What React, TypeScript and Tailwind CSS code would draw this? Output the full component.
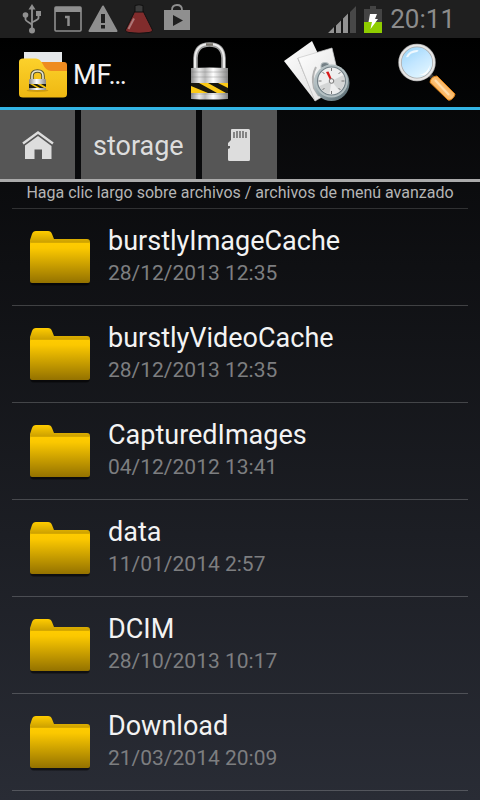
import { useId } from 'react';

interface Folder {
  name: string;
  modified: string;
}

const FOLDERS: Folder[] = [
  { name: 'burstlyImageCache', modified: '28/12/2013 12:35' },
  { name: 'burstlyVideoCache', modified: '28/12/2013 12:35' },
  { name: 'CapturedImages', modified: '04/12/2012 13:41' },
  { name: 'data', modified: '11/01/2014 2:57' },
  { name: 'DCIM', modified: '28/10/2013 10:17' },
  { name: 'Download', modified: '21/03/2014 20:09' },
];

function UsbIcon() {
  return (
    <svg width="20" height="30" viewBox="0 0 20 30" fill="#8f8f8f" aria-hidden="true">
      <path d="M10 0l3.500 5.500h-7z" />
      <path d="M10 4v22M3.500 12v3.500c0 2 6.500 3.500 6.500 6M16.500 9v5c0 2.500-6.500 3-6.500 5" fill="none" stroke="#8f8f8f" strokeWidth="1.800" />
      <circle cx="3.500" cy="11" r="2.800" />
      <rect x="14" y="7" width="5" height="5" />
      <circle cx="10" cy="26.500" r="3" />
    </svg>
  );
}

function CalendarIcon() {
  return (
    <svg width="28" height="26" viewBox="0 0 28 26" aria-hidden="true">
      <rect x="1" y="1" width="26" height="24" rx="1" fill="none" stroke="#8f8f8f" strokeWidth="1.600" />
      <rect x="1" y="1" width="26" height="5" fill="#8f8f8f" />
      <path d="M11 11h3.500v9" fill="none" stroke="#8f8f8f" strokeWidth="2.500" />
    </svg>
  );
}

function WarningIcon() {
  return (
    <svg width="30" height="28" viewBox="0 0 30 28" aria-hidden="true">
      <path d="M15 1.500L28.500 26h-27z" fill="#8f8f8f" stroke="#8f8f8f" strokeWidth="2" strokeLinejoin="round" />
      <path d="M13 9h4v9h-4zM13 20h4v3.500h-4z" fill="#1f1f1f" />
    </svg>
  );
}

function FlaskIcon() {
  return (
    <svg width="30" height="30" viewBox="0 0 30 30" aria-hidden="true">
      <path d="M11 7L1.500 26Q1 28 5 28.500Q15 30 25 28.500Q29 28 28.500 26L19 7z" fill="#812c2c" stroke="#111" />
      <path d="M11 1.500Q15 0 19 1.500V8h-8z" fill="#3d3d3d" stroke="#111" />
      <path d="M10 14.500L4.500 25" stroke="#ad7777" strokeWidth="2" />
    </svg>
  );
}

function PlayStoreIcon() {
  return (
    <svg width="26" height="27" viewBox="0 0 26 27" aria-hidden="true">
      <path d="M8 6q0-5 5-5t5 5" fill="none" stroke="#8f8f8f" strokeWidth="1.800" />
      <path d="M0 6h26v20H0z" fill="#8f8f8f" />
      <path d="M9 11l10 5.500-10 5.500z" fill="#1f1f1f" />
    </svg>
  );
}

function SignalIcon() {
  return (
    <svg width="28" height="27" viewBox="0 0 28 27" aria-hidden="true">
      <path d="M0 27L28 0v27z" fill="#161616" />
      <path d="M0 27l6-6v6zM8 19.500l5-5V27H8zM15 12.500l5-5V27h-5z" fill="#929292" />
      <path d="M22 6l6-6v27h-6z" fill="#484848" />
    </svg>
  );
}

function BatteryIcon() {
  return (
    <svg width="18" height="27" viewBox="0 0 18 27" aria-hidden="true">
      <path d="M6 0h6v3h6v13H0V3h6z" fill="#444" />
      <path d="M0 16h18v11H0z" fill="#8fcd00" />
      <path d="M6 8h7l-2 5h3L6.500 23l1.500-7H4.500z" fill="#fff" />
    </svg>
  );
}

function AppLogo() {
  const id = useId();
  return (
    <svg width="48" height="46" viewBox="0 0 48 46" aria-hidden="true">
      <defs>
        <linearGradient id={`${id}y`} x1="0" y1="0" x2="0" y2="1">
          <stop offset="0" stopColor="#fcd12b" />
          <stop offset="1" stopColor="#efb812" />
        </linearGradient>
        <linearGradient id={`${id}m`} x1="0" y1="0" x2="1" y2="0">
          <stop offset="0" stopColor="#888" />
          <stop offset="0.450" stopColor="#fff" />
          <stop offset="1" stopColor="#888" />
        </linearGradient>
      </defs>
      <path d="M5 0h38v20H5z" fill="#e5e8ea" />
      <path d="M20 10h25q3 0 3 3v20H20z" fill="#ee8c20" />
      <path d="M0 10q0-3.500 4-3.500h13q4 0 7 6 3 6.500 8 6.500h16v23q0 3.500-4 3.500H4q-4 0-4-3.500z" fill={`url(#${id}y)`} />
      <ellipse cx="18.500" cy="38.500" rx="11" ry="1.500" fill="#b28510" opacity="0.600" />
      <path d="M13 28v-4q0-5 5.500-5t5.500 5v4" fill="none" stroke="#575331" strokeWidth="3.600" />
      <path d="M13 28v-4q0-5 5.500-5t5.500 5v4" fill="none" stroke="#e8e5d0" strokeWidth="1.600" />
      <rect x="10" y="27" width="17" height="11" rx="1" fill={`url(#${id}m)`} />
      <path d="M10 32h17v4H10z" fill="#1d1d12" />
      <path d="M11 32l7 4h3l-7-4zM18 32l7 4h2v-1l-5-3z" fill="#f4c511" />
    </svg>
  );
}

function PadlockIcon() {
  const id = useId();
  return (
    <svg width="40" height="63" viewBox="0 0 40 63" aria-hidden="true">
      <defs>
        <linearGradient id={`${id}m`} x1="0" y1="0" x2="1" y2="0">
          <stop offset="0" stopColor="#8b8b8b" />
          <stop offset="0.220" stopColor="#e9e9e9" />
          <stop offset="0.380" stopColor="#b9b9b9" />
          <stop offset="0.600" stopColor="#fff" />
          <stop offset="0.800" stopColor="#c4c4c4" />
          <stop offset="1" stopColor="#858585" />
        </linearGradient>
        <clipPath id={`${id}c`}>
          <path d="M1 42h37v10H1z" />
        </clipPath>
      </defs>
      <path d="M5.500 29V17Q6 3.500 19.500 3.500T33.500 17v12" fill="none" stroke="#a1a1a1" strokeWidth="4.500" />
      <path d="M5 28V17Q6 3 19.500 3T34 17v11" fill="none" stroke="#ededed" strokeWidth="2" />
      <path d="M16 3.500h7" stroke="#77736b" strokeWidth="2.500" />
      <path d="M1 27q18.500-1 37 0v31q-18.500 1-37 0z" fill={`url(#${id}m)`} />
      <path d="M1 31h37M1 36h37M1 53h37" stroke="#777" opacity="0.350" />
      <g clipPath={`url(#${id}c)`}>
        <path d="M1 42h37v10H1z" fill="#17160f" />
        <path d="M1 45l17 7H1zM9 42h9l18 10h-9zM28 42h10v5z" fill="#fbc916" />
      </g>
    </svg>
  );
}

function RecentFilesIcon() {
  const id = useId();
  return (
    <svg width="68" height="62" viewBox="0 0 68 62" aria-hidden="true">
      <defs>
        <linearGradient id={`${id}p`} x1="0" y1="0" x2="1" y2="1">
          <stop offset="0" stopColor="#fff" />
          <stop offset="1" stopColor="#dcdcdc" />
        </linearGradient>
        <linearGradient id={`${id}r`} x1="0" y1="0" x2="1" y2="1">
          <stop offset="0" stopColor="#dce3e5" />
          <stop offset="0.500" stopColor="#90a0a5" />
          <stop offset="1" stopColor="#53666d" />
        </linearGradient>
      </defs>
      <path d="M0 20L28 0 46 38 31 60z" fill={`url(#${id}p)`} />
      <path d="M14 17l17 41" stroke="#a9a9a9" strokeWidth="1.500" />
      <path d="M14 17l34-10 9 38-26 15z" fill={`url(#${id}p)`} stroke="#c8c8c8" strokeWidth="0.700" />
      <path d="M32 26q-5 9-2 21l5 8" fill="none" stroke="#555" strokeWidth="2" opacity="0.400" />
      <path d="M37 24q0-2.500 4-2.500t4 2.500v3h-8z" fill="#748086" stroke="#b9c2c4" />
      <circle cx="47.500" cy="42" r="18" fill={`url(#${id}r)`} />
      <circle cx="47.500" cy="40" r="16.500" fill="#b4c0c3" />
      <circle cx="47.500" cy="40" r="14" fill="#eeefef" stroke="#738087" strokeWidth="1.200" />
      <path d="M47.500 40l12-6a13 13 0 0 1-4 16zM47.500 40l-12 5a13 13 0 0 0 10 8z" fill="#c9cccc" opacity="0.700" />
      <path d="M47.500 27v3M47.500 50v3M34.500 40h3M57.500 40h3M38.500 31l2 2M56.500 31l-2 2M38.500 49l2-2M56.500 49l-2-2" stroke="#777" strokeWidth="1" />
      <path d="M46 39l-4-8 2.500-.5 3.500 8z" fill="#d81a1a" />
      <circle cx="47.500" cy="40" r="2.300" fill="#eee" stroke="#777" />
    </svg>
  );
}

function MagnifierIcon() {
  const id = useId();
  return (
    <svg width="60" height="61" viewBox="0 -3 60 61" aria-hidden="true">
      <defs>
        <linearGradient id={`${id}g`} x1="0" y1="0" x2="0.600" y2="1">
          <stop offset="0" stopColor="#90d1f8" />
          <stop offset="0.550" stopColor="#c2e6ff" />
          <stop offset="1" stopColor="#e2f6ff" />
        </linearGradient>
        <linearGradient id={`${id}h`} x1="1" y1="0" x2="0" y2="1">
          <stop offset="0" stopColor="#e07f12" />
          <stop offset="0.500" stopColor="#ffc57b" />
          <stop offset="1" stopColor="#e8830d" />
        </linearGradient>
      </defs>
      <path d="M32 31l5 5" stroke="#373737" strokeWidth="4" />
      <path d="M39 32Q36 32 34 34t-2 4.500L50 56q2 1 4.500-1.500T57 50z" fill={`url(#${id}h)`} stroke="#e28212" />
      <path d="M37 36l14 15" stroke="#ffdcab" strokeWidth="2" />
      <circle cx="19" cy="18.500" r="17" fill={`url(#${id}g)`} stroke="#aaa" strokeWidth="3.500" />
      <circle cx="19" cy="18.500" r="17" fill="none" stroke="#e7e7e7" strokeWidth="2" />
      <path d="M8 13Q11 6 19 6q3 0 0 2-7 1-8 4-1 2-3 1z" fill="#fff" opacity="0.800" />
      <path d="M21 31q8-1 11-10-1 9-6 10z" fill="#fff" opacity="0.900" />
    </svg>
  );
}

function HomeIcon() {
  return (
    <svg width="32" height="28" viewBox="0 0 32 28" aria-hidden="true">
      <path d="M1 12.500L16 1.500l15 11" fill="none" stroke="#ddd" strokeWidth="2.400" />
      <path d="M16 5l13.500 10v13H20v-9.500h-7.500V28H3V14.500z" fill="#ddd" />
    </svg>
  );
}

function SdCardIcon() {
  return (
    <svg width="22" height="32" viewBox="0 0 22 32" aria-hidden="true">
      <path d="M4 0h16.500q1.500 0 1.500 1.500v29q0 1.500-1.500 1.500H1.500Q0 32 0 30.500V20l2-1v-2H0v-3l3-3V1q0-1 1-1z" fill="#ddd" />
      <path d="M6 3v6M9 2v7M12 2v7M15 2v7M18 3v6" stroke="#565656" strokeWidth="1.300" />
    </svg>
  );
}

function FolderIcon() {
  const id = useId();
  return (
    <svg width="60" height="56" viewBox="0 0 60 56" className="shrink-0" aria-hidden="true">
      <defs>
        <linearGradient id={`${id}b`} x1="0" y1="0" x2="0" y2="1">
          <stop offset="0" stopColor="#ffcc00" />
          <stop offset="0.150" stopColor="#fbc800" />
          <stop offset="1" stopColor="#947200" />
        </linearGradient>
        <linearGradient id={`${id}t`} x1="0" y1="0" x2="0" y2="1">
          <stop offset="0" stopColor="#ffcc00" />
          <stop offset="1" stopColor="#b88f00" />
        </linearGradient>
      </defs>
      <rect x="0" y="14" width="60" height="40" rx="3" fill="#000" opacity="0.400" />
      <rect x="1" y="14" width="58" height="41" rx="3" fill="#000" opacity="0.250" />
      <path d="M0 14V9l2-6q1-3 4-3h12q3 0 4 3l2 5h33q3 0 3 3v5H0z" fill={`url(#${id}t)`} />
      <rect y="11" width="60" height="41" rx="2" fill={`url(#${id}b)`} />
      <path d="M1 11.500h58" stroke="#d6a900" />
    </svg>
  );
}

function StatusBar() {
  return (
    <div className="flex h-[38px] items-center justify-between bg-[#1f1f1f] pr-[25px] pl-[22px]">
      <div className="flex items-center gap-1.5">
        <UsbIcon />
        <div className="pl-1.5">
          <CalendarIcon />
        </div>
        <WarningIcon />
        <FlaskIcon />
        <div className="pb-1 pl-1">
          <PlayStoreIcon />
        </div>
      </div>
      <div className="flex items-center gap-2">
        <SignalIcon />
        <BatteryIcon />
        <span className="text-[26px] leading-8 text-[#8c8c8c]">20:11</span>
      </div>
    </div>
  );
}

function ActionBar() {
  return (
    <header className="flex h-[72px] items-center border-b-3 border-[#33b5e5] bg-linear-to-b/srgb from-black to-[#040506]">
      <div className="flex flex-1 items-center gap-[6px] pt-1 pl-[19px]">
        <AppLogo />
        <h1 className="text-[27px] leading-8">MF…</h1>
      </div>
      <nav className="flex w-[324px] justify-between">
        <button type="button" aria-label="Bloquear" className="flex w-[108px] justify-center">
          <PadlockIcon />
        </button>
        <button type="button" aria-label="Recientes" className="flex w-[108px] justify-center">
          <RecentFilesIcon />
        </button>
        <button type="button" aria-label="Buscar" className="flex w-[108px] justify-center pl-1">
          <MagnifierIcon />
        </button>
      </nav>
    </header>
  );
}

function Breadcrumbs() {
  return (
    <nav className="flex h-[72px] gap-[6px] border-b-3 border-[#aaa] text-[27px]">
      <button type="button" aria-label="Inicio" className="flex w-[75px] items-center justify-center bg-[#565656]">
        <HomeIcon />
      </button>
      <button type="button" className="flex items-center bg-[#565656] px-3 pt-1 text-[#ddd]">
        storage
      </button>
      <button type="button" aria-label="Tarjeta SD" className="flex w-[75px] items-center justify-center bg-[#565656]">
        <SdCardIcon />
      </button>
    </nav>
  );
}

function FolderRow({ folder }: { folder: Folder }) {
  return (
    <li className="border-b border-white/20">
      <button type="button" className="flex h-24 w-full items-center gap-[18px] px-[18px] text-left">
        <span className="pt-1">
          <FolderIcon />
        </span>
        <span className="flex flex-col pb-1">
          <span className="text-[27px] leading-9 text-[#f3f3f3]">{folder.name}</span>
          <span className="text-[21px] leading-7 text-[#7d7e80]">{folder.modified}</span>
        </span>
      </button>
    </li>
  );
}

export default function App() {
  return (
    <div className="min-h-screen bg-linear-to-b/srgb from-[#020202] to-[#292c35] font-['Roboto',sans-serif] text-[#f3f3f3]">
      <StatusBar />
      <ActionBar />
      <Breadcrumbs />
      <main className="px-3">
        <p className="border-b border-white/15 pb-1 text-center text-[16px] leading-[22px] text-[#b5b5b5]">
          Haga clic largo sobre archivos / archivos de menú avanzado
        </p>
        <ul>
          {FOLDERS.map((folder) => (
            <FolderRow key={folder.name} folder={folder} />
          ))}
        </ul>
      </main>
    </div>
  );
}
